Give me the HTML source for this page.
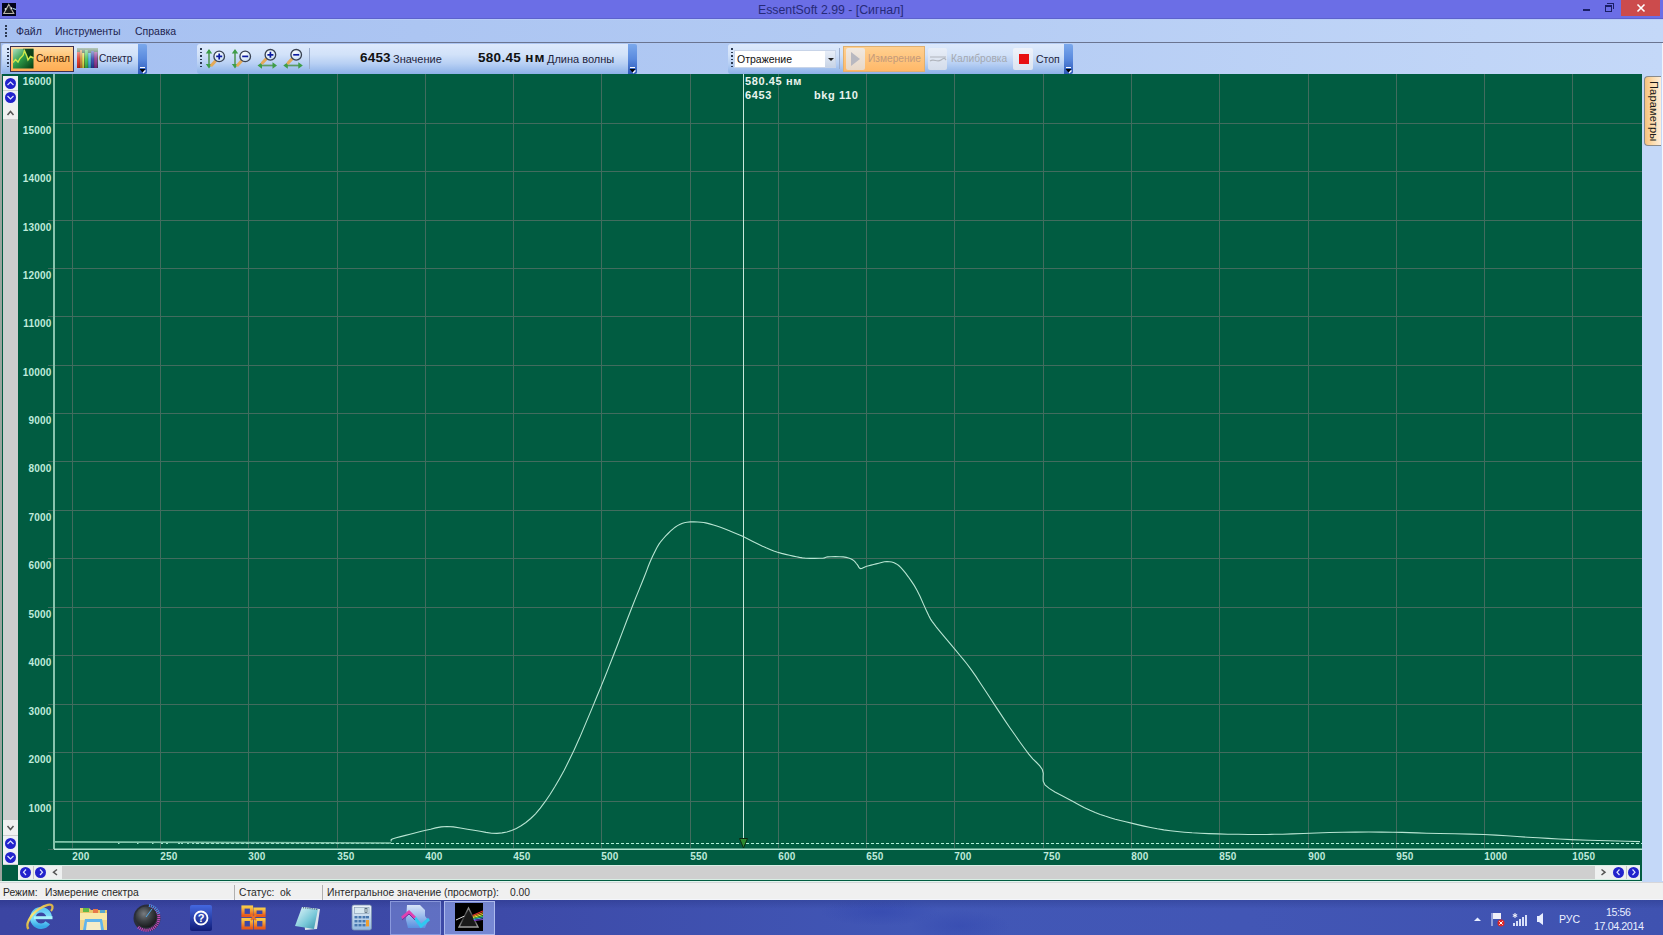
<!DOCTYPE html>
<html><head><meta charset="utf-8">
<style>
*{margin:0;padding:0;box-sizing:border-box}
html,body{width:1663px;height:935px;overflow:hidden;background:#c4d8f8;font-family:"Liberation Sans",sans-serif}
.a{position:absolute}
#title{left:0;top:0;width:1663px;height:19px;background:#6b6ee6;border-bottom:1px solid #5c62cc}
#title .t{left:758px;top:3px;font-size:12.3px;color:#262a78;white-space:nowrap}
#menu{left:0;top:19px;width:1663px;height:24px;background:linear-gradient(90deg,#a6c0f1 0%,#b2caf3 50%,#c4d8f8 100%);border-top:1px solid #b8ccf8;border-bottom:1px solid #6a7490;box-shadow:0 1px 0 #8a94aa}
.mi{font-size:10.5px;color:#1c2450;top:5px;white-space:nowrap}
#dock{left:0;top:43px;width:1663px;height:31px;background:linear-gradient(90deg,#a4bff1 0%,#b2caf3 50%,#c4d8f8 100%)}
.tb{top:1px;height:30px;background:linear-gradient(#dde9fc 0%,#d2e2f9 35%,#b8d0f4 65%,#8cb1e8 100%);border-radius:3px 0 0 3px}
.cap{top:1px;width:9px;height:30px;background:linear-gradient(#7aa8ec,#5a8ade 50%,#2c58b8);border-radius:0 2px 2px 0}
.grip{width:2px;background:repeating-linear-gradient(#2c3a52 0 1.6px,transparent 1.6px 3.5px)}
.tt{font-size:11px;color:#1e2440;white-space:nowrap}
#plot{left:0;top:74px;width:1642px;height:807px;background:#015c41}
svg{position:absolute;left:0;top:0}
.yl{position:absolute;left:0;width:51.5px;text-align:right;font-size:10px;font-weight:bold;letter-spacing:0.2px;color:#bfeadb;line-height:12px}
.xl{position:absolute;top:851px;font-size:10px;font-weight:bold;letter-spacing:0.2px;color:#bfeadb;line-height:12px}
#status{left:0;top:882px;width:1663px;height:18px;background:#f0f0f0;border-top:1px solid #d6d6da;border-bottom:1px solid #f4f6fc}
.st{font-size:10.3px;color:#282828;top:4px;white-space:nowrap}
#task{left:0;top:900px;width:1663px;height:35px;background:linear-gradient(rgba(10,20,80,.18),rgba(0,0,0,0) 25%),radial-gradient(ellipse 60px 14px at 880px 12px,rgba(40,60,170,.35),rgba(0,0,0,0)),radial-gradient(ellipse 50px 16px at 960px 26px,rgba(40,60,170,.3),rgba(0,0,0,0)),linear-gradient(90deg,#3b45a2 0%,#3d4aa8 30%,#4157b6 55%,#4256b5 75%,#3f52b0 100%)}
.bc{width:11px;height:11px;border-radius:50%;background:#2222cc}
</style></head><body>

<!-- title bar -->
<div id="title" class="a">
  <div class="a" style="left:2px;top:3px;width:14px;height:13px;background:#02021a"></div>
  <svg width="16" height="16" style="left:2px;top:2px"><path d="M6.8,2.5 L11.8,11.5 L1.8,11.5 Z" fill="#1a1a1a" stroke="#b8b4a8" stroke-width="1.1"/><path d="M7,4 L9,8" stroke="#5a5a5a" stroke-width="1"/><circle cx="3.5" cy="7" r=".9" fill="#e0e0e0"/><circle cx="9.5" cy="6.2" r=".9" fill="#f0f0f0"/><path d="M11,6.5 L14,7.5" stroke="#a8d8e8" stroke-width="1.3"/></svg>
  <div class="a t">EssentSoft 2.99 - [Сигнал]</div>
  <div class="a" style="left:1583px;top:9px;width:7px;height:2px;background:#1a1f66"></div>
  <div class="a" style="left:1607px;top:3px;width:7px;height:6px;border:1px solid #1a1f66;border-left:none;border-bottom:none"></div>
  <div class="a" style="left:1605px;top:5px;width:7px;height:7px;border:1px solid #1a1f66;border-top-width:2px"></div>
  <div class="a" style="left:1621px;top:0;width:39px;height:16px;background:#cc4b4c"></div>
  <svg width="20" height="16" style="left:1631px;top:0"><path d="M6.5,4.5 L13.5,11.5 M13.5,4.5 L6.5,11.5" stroke="#fff" stroke-width="1.6"/></svg>
</div>

<!-- menu -->
<div id="menu" class="a">
  <div class="a grip" style="left:5px;top:5px;height:13px"></div>
  <div class="a mi" style="left:16px">Файл</div>
  <div class="a mi" style="left:55px">Инструменты</div>
  <div class="a mi" style="left:135px">Справка</div>
</div>

<!-- toolbar dock -->
<div id="dock" class="a">
  <div class="a" style="left:0;top:0;width:1px;height:31px;background:#8090a8"></div>
  <!-- toolbar 1 -->
  <div class="a tb" style="left:2px;width:137px"></div>
  <div class="a cap" style="left:138px"><svg width="9" height="8" style="left:0;top:22px"><path d="M2,1.5 H7" stroke="#fff" stroke-width="1"/><path d="M1.5,3 H7.5 L4.5,6.5 Z" fill="#000"/><path d="M5,7 L7.5,4.5" stroke="#fff" stroke-width="1.2"/></svg></div>
  <div class="a grip" style="left:7px;top:5px;height:19px"></div>
  <div class="a" style="left:10px;top:3px;width:64px;height:26px;border:1px solid #3c3050;background:linear-gradient(#ffdba0,#ffb964 60%,#ffad55);"></div>
  <svg width="21" height="21" style="left:13px;top:5px">
    <defs><linearGradient id="g1" x1="0" y1="0" x2="1" y2="1"><stop offset="0" stop-color="#b0e0c0"/><stop offset=".45" stop-color="#2e9c4a"/><stop offset="1" stop-color="#023a10"/></linearGradient></defs>
    <rect x="0" y="0.8" width="20.5" height="19.7" fill="url(#g1)"/>
    <path d="M11.5,2.5 L14,8 L15,12 L17.5,8 L20.5,9.5 V0.8 H10 Z" fill="#042a0e" opacity=".75"/>
    <path d="M0,14.5 L2.5,11.5 L5,14 L7,10.5 L10,7.5 L11.5,2.8 L14,8.5 L15,12 L17.5,8.5 L20.5,10" fill="none" stroke="#cce84c" stroke-width="1.4"/>
  </svg>
  <div class="a tt" style="left:36px;top:10px;color:#4a2200;font-size:10.2px">Сигнал</div>
  <svg width="21" height="21" style="left:77px;top:5px">
    <defs>
      <linearGradient id="sb" x1="0" y1="0" x2="0" y2="1"><stop offset="0" stop-color="#fff" stop-opacity=".7"/><stop offset=".55" stop-color="#fff" stop-opacity=".15"/><stop offset="1" stop-color="#000" stop-opacity=".2"/></linearGradient>
    </defs>
    <rect x="0" y="0" width="21" height="20" fill="#0f4a22"/>
    <rect x="0" y="4" width="3" height="16" fill="#e02818"/><rect x="3" y="2" width="2" height="18" fill="#f08830"/><rect x="5" y="5" width="2.5" height="15" fill="#e8e040"/><rect x="8" y="2" width="3" height="18" fill="#38c048"/><rect x="11" y="5" width="3" height="15" fill="#38b0e0"/><rect x="14" y="3" width="3" height="17" fill="#2838b0"/><rect x="17" y="4" width="3.5" height="16" fill="#8a2890"/>
    <g stroke="#0f3a1a" stroke-width=".6" opacity=".6"><path d="M3,0 V20 M5,0 V20 M7.5,0 V20 M11,0 V20 M14,0 V20 M17,0 V20"/></g>
    <rect x="0" y="0" width="21" height="20" fill="url(#sb)"/>
  </svg>
  <div class="a tt" style="left:99px;top:10px;font-size:10.2px">Спектр</div>

  <!-- toolbar 2 -->
  <div class="a tb" style="left:197px;width:432px"></div>
  <div class="a cap" style="left:628px"><svg width="9" height="8" style="left:0;top:22px"><path d="M2,1.5 H7" stroke="#fff" stroke-width="1"/><path d="M1.5,3 H7.5 L4.5,6.5 Z" fill="#000"/><path d="M5,7 L7.5,4.5" stroke="#fff" stroke-width="1.2"/></svg></div>
  <div class="a grip" style="left:200px;top:5px;height:19px"></div>
  <svg width="120" height="31" style="left:200px;top:0px">
    <defs>
      <linearGradient id="zg" x1="0" y1="0" x2="0" y2="1"><stop offset="0" stop-color="#58b060"/><stop offset=".5" stop-color="#7a9a80"/><stop offset="1" stop-color="#2a7a38"/></linearGradient>
      <linearGradient id="zg2" x1="0" y1="0" x2="1" y2="0"><stop offset="0" stop-color="#3a9a48"/><stop offset=".5" stop-color="#7a9a80"/><stop offset="1" stop-color="#3a9a48"/></linearGradient>
      <radialGradient id="zgl" cx=".4" cy=".35" r=".7"><stop offset="0" stop-color="#ffffff"/><stop offset="1" stop-color="#c4dcf4"/></radialGradient>
    </defs>
    <g transform="translate(0,0)"><path d="M9,7 V23" stroke="#5c9c64" stroke-width="1.7"/><path d="M5.8,10.5 L9,6 L12.2,10.5 Z M5.8,21 L9,25.5 L12.2,21 Z" fill="#3e9e48"/><path d="M11.6,22.2 L15.4,17.9" stroke="#e4aa5a" stroke-width="3" stroke-linecap="round"/><circle cx="19.2" cy="13.4" r="5.3" fill="url(#zgl)" stroke="#3a4252" stroke-width="1.3"/><path d="M16.2,13.4 H22.2 M19.2,10.4 V16.4" stroke="#0a1aa0" stroke-width="1.7"/></g><g transform="translate(26,0)"><path d="M9,7 V23" stroke="#5c9c64" stroke-width="1.7"/><path d="M5.8,10.5 L9,6 L12.2,10.5 Z M5.8,21 L9,25.5 L12.2,21 Z" fill="#3e9e48"/><path d="M11.6,22.2 L15.4,17.9" stroke="#e4aa5a" stroke-width="3" stroke-linecap="round"/><circle cx="19.2" cy="13.4" r="5.3" fill="url(#zgl)" stroke="#3a4252" stroke-width="1.3"/><path d="M16.2,13.4 H22.2" stroke="#0a1aa0" stroke-width="1.7"/></g><g transform="translate(0,0)"><path d="M60,22.5 H75" stroke="#5c9c64" stroke-width="1.7"/><path d="M62,19.3 L57.5,22.5 L62,25.7 Z M72.5,19.3 L77,22.5 L72.5,25.7 Z" fill="#3e9e48"/><path d="M62.3,20 L66.2,15.9" stroke="#e4aa5a" stroke-width="3" stroke-linecap="round"/><circle cx="70.4" cy="11.8" r="5.3" fill="url(#zgl)" stroke="#3a4252" stroke-width="1.3"/><path d="M67.4,11.8 H73.4 M70.4,8.8 V14.8" stroke="#0a1aa0" stroke-width="1.7"/></g><g transform="translate(25.8,0)"><path d="M60,22.5 H75" stroke="#5c9c64" stroke-width="1.7"/><path d="M62,19.3 L57.5,22.5 L62,25.7 Z M72.5,19.3 L77,22.5 L72.5,25.7 Z" fill="#3e9e48"/><path d="M62.3,20 L66.2,15.9" stroke="#e4aa5a" stroke-width="3" stroke-linecap="round"/><circle cx="70.4" cy="11.8" r="5.3" fill="url(#zgl)" stroke="#3a4252" stroke-width="1.3"/><path d="M67.4,11.8 H73.4" stroke="#0a1aa0" stroke-width="1.7"/></g>
  </svg>
  <div class="a" style="left:309px;top:5px;width:1px;height:21px;background:#9aaccc"></div>
  <div class="a tt" style="left:360px;top:7px;font-size:13.5px;font-weight:bold;color:#111;letter-spacing:0.2px">6453</div>
  <div class="a tt" style="left:393px;top:10px">Значение</div>
  <div class="a tt" style="left:478px;top:7px;font-size:13.5px;font-weight:bold;color:#111;letter-spacing:0.3px">580.45 <span style="letter-spacing:1.2px">нм</span></div>
  <div class="a tt" style="left:547px;top:10px">Длина волны</div>

  <!-- toolbar 3 -->
  <div class="a tb" style="left:728px;width:337px"></div>
  <div class="a cap" style="left:1064px"><svg width="9" height="8" style="left:0;top:22px"><path d="M2,1.5 H7" stroke="#fff" stroke-width="1"/><path d="M1.5,3 H7.5 L4.5,6.5 Z" fill="#000"/><path d="M5,7 L7.5,4.5" stroke="#fff" stroke-width="1.2"/></svg></div>
  <div class="a grip" style="left:731px;top:5px;height:19px"></div>
  <div class="a" style="left:734px;top:7px;width:102px;height:18px;background:#fff;border:1px solid #c8d4e8"></div>
  <div class="a" style="left:825px;top:8px;width:10px;height:16px;background:linear-gradient(#e8eef8,#c8d4e6)"></div>
  <svg width="6" height="4" style="left:828px;top:15px"><path d="M0,0 H6 L3,3 Z" fill="#222"/></svg>
  <div class="a tt" style="left:737px;top:10px;font-size:10.5px;color:#111">Отражение</div>
  <div class="a" style="left:839px;top:5px;width:1px;height:21px;background:#9aaccc"></div>
  <div class="a" style="left:843px;top:3px;width:82px;height:26px;border:1px solid #e0b070;background:linear-gradient(#ffd090,#ffb868)"></div>
  <div class="a" style="left:846px;top:5px;width:19px;height:22px;background:linear-gradient(#f0e8e0,#e8d8c8);border-radius:2px"></div>
  <svg width="10" height="14" style="left:851px;top:9px"><path d="M0,0 L9,7 L0,14 Z" fill="#b8b8c0"/></svg>
  <div class="a tt" style="left:868px;top:10px;color:#c49a7a;font-size:10.2px">Измерение</div>
  <div class="a" style="left:928px;top:5px;width:19px;height:22px;background:linear-gradient(#e8eef8,#d4dcea);border-radius:2px"></div>
  <svg width="18" height="10" style="left:929px;top:11px"><path d="M1,3 H17 M1,7 C5,4 8,9 12,6 S16,5 17,6" fill="none" stroke="#b0b4bc" stroke-width="1.2"/></svg>
  <div class="a tt" style="left:951px;top:10px;color:#a4a8b0;font-size:10.2px">Калибровка</div>
  <div class="a" style="left:1013px;top:5px;width:20px;height:22px;background:linear-gradient(#eef2fa,#dce4f0);border-radius:2px"></div>
  <div class="a" style="left:1019px;top:11px;width:10px;height:10px;background:#e81010"></div>
  <div class="a tt" style="left:1036px;top:10px;font-size:10.5px">Стоп</div>

  <div class="a" style="left:1662px;top:0;width:1px;height:31px;background:#f0f4fc"></div>
</div>

<!-- plot -->
<div id="plot" class="a">
  <div class="a" style="left:0;top:0;width:2px;height:807px;background:#9aa49e"></div>
</div>
<svg width="1663" height="935" style="left:0;top:0">
  <g stroke="#426c5e" stroke-width="1">
<line x1="72.5" y1="74" x2="72.5" y2="848" />
<line x1="160.5" y1="74" x2="160.5" y2="848" />
<line x1="248.5" y1="74" x2="248.5" y2="848" />
<line x1="337.5" y1="74" x2="337.5" y2="848" />
<line x1="425.5" y1="74" x2="425.5" y2="848" />
<line x1="513.5" y1="74" x2="513.5" y2="848" />
<line x1="601.5" y1="74" x2="601.5" y2="848" />
<line x1="690.5" y1="74" x2="690.5" y2="848" />
<line x1="778.5" y1="74" x2="778.5" y2="848" />
<line x1="866.5" y1="74" x2="866.5" y2="848" />
<line x1="954.5" y1="74" x2="954.5" y2="848" />
<line x1="1043.5" y1="74" x2="1043.5" y2="848" />
<line x1="1131.5" y1="74" x2="1131.5" y2="848" />
<line x1="1219.5" y1="74" x2="1219.5" y2="848" />
<line x1="1308.5" y1="74" x2="1308.5" y2="848" />
<line x1="1396.5" y1="74" x2="1396.5" y2="848" />
<line x1="1484.5" y1="74" x2="1484.5" y2="848" />
<line x1="1572.5" y1="74" x2="1572.5" y2="848" />
<line x1="48" y1="801.5" x2="1642" y2="801.5" />
<line x1="48" y1="752.5" x2="1642" y2="752.5" />
<line x1="48" y1="704.5" x2="1642" y2="704.5" />
<line x1="48" y1="655.5" x2="1642" y2="655.5" />
<line x1="48" y1="607.5" x2="1642" y2="607.5" />
<line x1="48" y1="558.5" x2="1642" y2="558.5" />
<line x1="48" y1="510.5" x2="1642" y2="510.5" />
<line x1="48" y1="461.5" x2="1642" y2="461.5" />
<line x1="48" y1="413.5" x2="1642" y2="413.5" />
<line x1="48" y1="365.5" x2="1642" y2="365.5" />
<line x1="48" y1="316.5" x2="1642" y2="316.5" />
<line x1="48" y1="268.5" x2="1642" y2="268.5" />
<line x1="48" y1="220.5" x2="1642" y2="220.5" />
<line x1="48" y1="171.5" x2="1642" y2="171.5" />
<line x1="48" y1="123.5" x2="1642" y2="123.5" />
  </g>
  <line x1="54" y1="74" x2="54" y2="850" stroke="#88c4ae" stroke-width="2"/>
  <line x1="48" y1="849.5" x2="54" y2="849.5" stroke="#3b6a5a" stroke-width="1"/><line x1="54" y1="849.3" x2="1642" y2="849.3" stroke="#b0e2d0" stroke-width="1.5"/>
  <line x1="196" y1="843.5" x2="1642" y2="843.5" stroke="#b0f0d8" stroke-width="1" stroke-dasharray="3,2"/><path d="M118,843.5 h1.5 M137,843.5 h1.5 M152,843.5 h1.5 M161,843.5 h2 M166,843.5 h2 M178,843.5 h2 M181,843.5 h2 M187,843.5 h2 M192,843.5 h2" stroke="#a0e8d0" stroke-width="1"/><path d="M54,841.9 L200,842.4 L391,843" fill="none" stroke="#80c4aa" stroke-width="1.6"/>
  <path d="M391.2,841.6 L391.2,840.7 L391.2,840.4 L391.0,840.0 L391.4,839.5 L393.0,838.8 L396.2,837.8 L400.6,836.6 L405.5,835.4 L410.0,834.2 L413.9,833.2 L417.6,832.2 L421.5,831.3 L425.8,830.3 L430.6,829.2 L435.7,827.9 L441.2,826.9 L447.0,826.5 L453.4,826.9 L460.4,828.0 L467.4,829.2 L474.0,830.3 L480.1,831.3 L486.0,832.4 L491.6,833.2 L497.0,833.4 L502.1,832.9 L506.9,832.0 L511.6,830.5 L516.3,828.4 L521.1,825.7 L525.9,822.5 L530.7,818.5 L535.5,813.8 L540.3,808.1 L545.1,801.7 L550.0,794.5 L554.8,786.8 L559.5,778.7 L564.2,770.2 L568.9,760.8 L574.0,750.2 L579.7,737.6 L585.7,723.4 L591.7,709.1 L597.0,696.3 L601.3,685.9 L605.0,676.8 L608.5,667.9 L612.5,657.8 L617.2,645.7 L622.3,632.4 L627.3,619.3 L631.8,607.8 L635.6,598.1 L639.1,589.6 L642.1,582.2 L644.7,575.7 L646.7,570.6 L648.1,566.8 L649.4,563.5 L650.9,560.0 L652.7,556.0 L654.7,551.9 L656.7,548.0 L658.8,544.4 L661.0,541.3 L663.4,538.5 L665.7,535.9 L668.1,533.5 L670.4,531.2 L672.8,529.1 L675.1,527.2 L677.5,525.6 L679.7,524.4 L681.9,523.4 L684.2,522.7 L686.9,522.2 L690.2,521.9 L694.0,521.9 L697.7,522.0 L701.0,522.2 L703.6,522.5 L705.7,522.9 L707.8,523.4 L710.4,524.1 L713.5,525.0 L716.8,526.1 L720.5,527.3 L724.4,528.8 L728.8,530.5 L733.5,532.4 L738.4,534.5 L743.2,536.6 L748.0,538.9 L752.8,541.4 L757.5,543.8 L762.0,546.0 L766.1,547.8 L770.0,549.4 L773.8,550.9 L777.6,552.2 L781.6,553.4 L785.6,554.4 L789.5,555.3 L793.2,556.1 L796.4,556.8 L799.4,557.4 L802.3,557.9 L805.7,558.2 L810.0,558.4 L814.8,558.4 L819.4,558.3 L822.9,558.2 L824.7,557.9 L825.3,557.6 L825.9,557.2 L827.6,556.9 L830.9,556.7 L835.2,556.6 L839.6,556.7 L843.3,556.9 L846.2,557.4 L848.6,558.0 L850.7,558.8 L852.6,559.7 L854.1,560.8 L855.3,562.1 L856.3,563.5 L857.3,564.7 L858.1,565.9 L858.8,567.1 L859.5,568.1 L860.5,568.6 L861.8,568.5 L863.2,567.8 L864.9,567.0 L866.7,566.3 L868.8,565.7 L871.1,565.1 L873.6,564.5 L876.1,563.9 L878.8,563.2 L881.5,562.5 L884.3,561.8 L887.0,561.6 L889.5,561.7 L891.8,562.0 L894.1,562.7 L896.4,563.9 L898.7,565.5 L900.9,567.6 L903.1,570.1 L905.6,573.2 L908.3,576.8 L911.2,580.9 L914.2,585.4 L917.1,590.5 L920.1,596.5 L923.1,603.4 L926.1,610.0 L928.7,615.5 L930.6,619.1 L932.1,621.4 L933.8,623.7 L936.4,627.1 L940.5,632.2 L945.5,638.2 L950.8,644.4 L955.6,650.2 L959.6,655.0 L963.3,659.4 L967.0,664.0 L971.0,669.4 L975.6,675.9 L980.4,683.2 L985.4,690.8 L990.3,698.3 L995.1,705.6 L999.9,712.9 L1004.7,720.1 L1009.5,727.2 L1014.5,734.3 L1019.5,741.5 L1024.4,748.2 L1028.8,754.1 L1032.8,758.8 L1036.6,762.5 L1039.8,765.9 L1042.3,769.5 L1043.3,773.4 L1043.1,777.3 L1043.2,781.2 L1045.0,784.9 L1049.2,788.4 L1054.9,791.9 L1061.2,795.2 L1067.3,798.4 L1073.0,801.6 L1078.8,804.7 L1084.5,807.7 L1090.0,810.3 L1095.2,812.5 L1100.2,814.4 L1105.1,816.1 L1110.2,817.7 L1115.3,819.2 L1120.4,820.5 L1125.7,821.8 L1131.4,823.1 L1137.5,824.6 L1144.0,826.1 L1150.6,827.5 L1157.3,828.8 L1163.8,829.9 L1170.3,830.7 L1177.1,831.5 L1184.3,832.2 L1192.1,832.8 L1200.3,833.2 L1208.9,833.6 L1218.0,833.9 L1227.8,834.2 L1238.2,834.3 L1248.6,834.5 L1258.4,834.5 L1266.9,834.5 L1274.6,834.3 L1282.6,834.2 L1292.0,833.9 L1303.4,833.5 L1316.2,833.0 L1329.5,832.5 L1342.5,832.2 L1355.5,832.1 L1368.8,832.0 L1381.6,832.1 L1393.0,832.2 L1402.1,832.4 L1409.4,832.6 L1417.0,832.9 L1426.7,833.2 L1439.7,833.5 L1454.7,833.7 L1470.1,834.1 L1484.0,834.5 L1495.9,835.1 L1506.7,835.8 L1517.1,836.5 L1527.7,837.2 L1538.1,837.8 L1548.1,838.4 L1558.8,839.0 L1571.5,839.6 L1588.5,840.2 L1608.5,840.8 L1627.1,841.3 L1640.0,841.6" fill="none" stroke="#b8e4d2" stroke-width="1.1"/>
  <line x1="743.5" y1="74" x2="743.5" y2="838" stroke="#c8e8da" stroke-width="1"/>
  <path d="M739.5,838.5 H747.5 L743.5,848 Z" fill="#2e8a30" stroke="#0a2a10" stroke-width="1"/>
</svg>
<div class="a" style="left:0;top:0;width:1663px;height:935px">
<div class="yl" style="top:803.1px">1000</div>
<div class="yl" style="top:754.1px">2000</div>
<div class="yl" style="top:706.1px">3000</div>
<div class="yl" style="top:657.1px">4000</div>
<div class="yl" style="top:609.1px">5000</div>
<div class="yl" style="top:560.1px">6000</div>
<div class="yl" style="top:512.1px">7000</div>
<div class="yl" style="top:463.1px">8000</div>
<div class="yl" style="top:415.1px">9000</div>
<div class="yl" style="top:367.1px">10000</div>
<div class="yl" style="top:318.1px">11000</div>
<div class="yl" style="top:270.1px">12000</div>
<div class="yl" style="top:222.1px">13000</div>
<div class="yl" style="top:173.1px">14000</div>
<div class="yl" style="top:125.1px">15000</div>
<div class="yl" style="top:75.8px">16000</div>
<div class="xl" style="left:72.3px">200</div>
<div class="xl" style="left:160.3px">250</div>
<div class="xl" style="left:248.3px">300</div>
<div class="xl" style="left:337.3px">350</div>
<div class="xl" style="left:425.3px">400</div>
<div class="xl" style="left:513.3px">450</div>
<div class="xl" style="left:601.3px">500</div>
<div class="xl" style="left:690.3px">550</div>
<div class="xl" style="left:778.3px">600</div>
<div class="xl" style="left:866.3px">650</div>
<div class="xl" style="left:954.3px">700</div>
<div class="xl" style="left:1043.3px">750</div>
<div class="xl" style="left:1131.3px">800</div>
<div class="xl" style="left:1219.3px">850</div>
<div class="xl" style="left:1308.3px">900</div>
<div class="xl" style="left:1396.3px">950</div>
<div class="xl" style="left:1484.3px">1000</div>
<div class="xl" style="left:1572.3px">1050</div>
</div>
<div class="a" style="left:745px;top:75px;font-size:11px;font-weight:bold;color:#e8f4ee;letter-spacing:0.6px;white-space:nowrap">580.45 нм</div>
<div class="a" style="left:745px;top:89px;font-size:11px;font-weight:bold;color:#e8f4ee;letter-spacing:0.6px">6453</div>
<div class="a" style="left:814px;top:89px;font-size:11px;font-weight:bold;color:#e8f4ee;letter-spacing:0.6px;white-space:nowrap">bkg 110</div>

<!-- left scrollbar -->
<div class="a" style="left:3px;top:76px;width:15px;height:789px;background:#cdcdcd"></div>
<div class="a" style="left:3px;top:76px;width:15px;height:14px;background:#eef0f4"></div>
<div class="a" style="left:3px;top:91px;width:15px;height:14px;background:#eef0f4"></div>
<div class="a" style="left:3px;top:105px;width:15px;height:14px;background:#f0f0f0"></div>
<div class="a bc" style="left:5px;top:77.5px"></div>
<div class="a bc" style="left:5px;top:91.5px"></div>
<svg width="15" height="200" style="left:3px;top:76px">
  <path d="M4.5,9 L7.5,6 L10.5,9" stroke="#e0e4ff" stroke-width="1.2" fill="none"/>
  <path d="M4.5,20 L7.5,23 L10.5,20" stroke="#e0e4ff" stroke-width="1.2" fill="none"/>
  <path d="M4.5,39 L7.5,35.5 L10.5,39" stroke="#555" stroke-width="1.5" fill="none"/>
</svg>
<div class="a" style="left:3px;top:820px;width:15px;height:15px;background:#f0f0f0"></div>
<div class="a" style="left:3px;top:836px;width:15px;height:14px;background:#eef0f4"></div>
<div class="a" style="left:3px;top:850px;width:15px;height:14px;background:#eef0f4"></div>
<div class="a bc" style="left:5px;top:837.5px"></div>
<div class="a bc" style="left:5px;top:851.5px"></div>
<svg width="15" height="50" style="left:3px;top:820px">
  <path d="M4.5,6 L7.5,9.5 L10.5,6" stroke="#555" stroke-width="1.5" fill="none"/>
  <path d="M4.5,24 L7.5,21 L10.5,24" stroke="#e0e4ff" stroke-width="1.2" fill="none"/>
  <path d="M4.5,36 L7.5,39 L10.5,36" stroke="#e0e4ff" stroke-width="1.2" fill="none"/>
</svg>

<!-- bottom scrollbar -->
<div class="a" style="left:18px;top:865px;width:1622px;height:15px;background:#cfcfcf;border-top:1px solid #d8eee4;border-bottom:1px solid #d8eee4"></div>
<div class="a" style="left:18px;top:866px;width:44px;height:13px;background:#eef0f0"></div>
<div class="a" style="left:1595px;top:866px;width:45px;height:13px;background:#eef0f0"></div>
<div class="a" style="left:33px;top:866px;width:1px;height:13px;background:#c8c8c8"></div>
<div class="a" style="left:1626px;top:866px;width:1px;height:13px;background:#c8c8c8"></div>
<div class="a bc" style="left:19.5px;top:866.7px"></div>
<div class="a bc" style="left:35px;top:866.7px"></div>
<div class="a bc" style="left:1613px;top:866.7px"></div>
<div class="a bc" style="left:1628px;top:866.7px"></div>
<svg width="60" height="14" style="left:18px;top:865px">
  <path d="M8,4.5 L5.5,7.2 L8,10" stroke="#e0e4ff" stroke-width="1.2" fill="none"/>
  <path d="M22,4.5 L24.5,7.2 L22,10" stroke="#e0e4ff" stroke-width="1.2" fill="none"/>
  <path d="M39,4.5 L35.5,7.2 L39,10" stroke="#555" stroke-width="1.5" fill="none"/>
</svg>
<svg width="60" height="14" style="left:1595px;top:865px">
  <path d="M6.5,4.5 L10,7.2 L6.5,10" stroke="#555" stroke-width="1.5" fill="none"/>
  <path d="M24.5,4.5 L22,7.2 L24.5,10" stroke="#e0e4ff" stroke-width="1.2" fill="none"/>
  <path d="M37.5,4.5 L40,7.2 L37.5,10" stroke="#e0e4ff" stroke-width="1.2" fill="none"/>
</svg>
<div class="a" style="left:0;top:881px;width:1642px;height:1px;background:#e2f6ee"></div>

<!-- right param tab -->
<div class="a" style="left:1644px;top:76px;width:17px;height:70px;background:linear-gradient(90deg,#f6c27c,#fcdcae 50%,#fdeedc);border:1px solid #8a8a8a;border-right:none;border-radius:4px 0 0 4px"></div>
<div class="a" style="left:1647px;top:81px;width:60px;height:14px;transform-origin:0 0;transform:translate(12.5px,0) rotate(90deg);font-size:11px;letter-spacing:0.2px;color:#1a1a1a;white-space:nowrap">Параметры</div>
<div class="a" style="left:1662px;top:74px;width:1px;height:807px;background:#f4f8ff"></div>

<!-- status -->
<div id="status" class="a">
  <div class="a st" style="left:3px">Режим:</div>
  <div class="a st" style="left:45px">Измерение спектра</div>
  <div class="a" style="left:234px;top:2px;width:1px;height:16px;background:#b0b0b0"></div>
  <div class="a st" style="left:239px">Статус:</div>
  <div class="a st" style="left:280px">ok</div>
  <div class="a" style="left:322px;top:2px;width:1px;height:16px;background:#b0b0b0"></div>
  <div class="a st" style="left:327px">Интегральное значение (просмотр):</div>
  <div class="a st" style="left:510px">0.00</div>
</div>

<!-- taskbar -->
<div id="task" class="a">
  <div class="a" style="left:390px;top:1px;width:51px;height:34px;background:rgba(150,170,235,.40);border:1px solid rgba(190,205,255,.45)"></div>
  <div class="a" style="left:444px;top:1px;width:51px;height:34px;background:rgba(165,185,245,.55);border:1px solid rgba(210,220,255,.6)"></div>
  <!-- IE -->
  <svg width="32" height="32" style="left:24px;top:2px">
    <defs><linearGradient id="ie" x1="0" y1="0" x2="0" y2="1"><stop offset="0" stop-color="#60c8f4"/><stop offset=".5" stop-color="#80e4fc"/><stop offset="1" stop-color="#38a8e8"/></linearGradient>
    <linearGradient id="gold" x1="0" y1="1" x2="1" y2="0"><stop offset="0" stop-color="#d8b040"/><stop offset=".4" stop-color="#f8e878"/><stop offset="1" stop-color="#d8b048"/></linearGradient></defs>
    <path d="M23.76,20.73 A8.25,8.25 0 1,1 25.25,16" fill="none" stroke="url(#ie)" stroke-width="5.5"/>
    <rect x="10" y="14.2" width="18.5" height="3" fill="#a8f4fc"/>
    <path d="M4.5,27 C1,23 6,13 15,7 C21,3 28,1 28.5,4.5 C28.8,6.5 28,8 27,9" fill="none" stroke="url(#gold)" stroke-width="2.3"/>
  </svg>
  <!-- folder -->
  <svg width="30" height="28" style="left:79px;top:5px">
    <path d="M1,3 H10 L12,5 H28 V24 H1 Z" fill="#e8c868"/>
    <rect x="4" y="3" width="6" height="4" fill="#60b848"/><rect x="14" y="4" width="5" height="4" fill="#e87848"/><rect x="21" y="5" width="5" height="3" fill="#58a8d0"/>
    <path d="M1,8 H28 V24 H1 Z" fill="#f8e8a8"/>
    <path d="M1,15 H28 V25 H1 Z" fill="#f0d488"/>
    <path d="M6,14 H23 L25,25 H4 Z" fill="#60b4ec"/><path d="M8,17 H21 L22,25 H7 Z" fill="#f4ecc8"/>
  </svg>
  <!-- knob -->
  <svg width="30" height="30" style="left:132px;top:3px">
    <defs><radialGradient id="kn" cx=".4" cy=".35" r=".7"><stop offset="0" stop-color="#787c80"/><stop offset=".5" stop-color="#3c4044"/><stop offset="1" stop-color="#141618"/></radialGradient></defs>
    <circle cx="15" cy="15" r="13.5" fill="#2a2e3a"/>
    <path d="M17,2.5 A12.5,12.5 0 1,1 6,24" fill="none" stroke="#c848c0" stroke-width="3" stroke-dasharray="1.2,0.8"/>
    <path d="M17,2.5 A12.5,12.5 0 0,1 27,11" fill="none" stroke="#3c8ce0" stroke-width="3" stroke-dasharray="1.2,0.8"/>
    <circle cx="14" cy="14" r="10.5" fill="url(#kn)"/>
    <path d="M14,14 L20,6" stroke="#50a8e8" stroke-width="1"/>
  </svg>
  <!-- help -->
  <svg width="24" height="30" style="left:189px;top:3px">
    <defs><linearGradient id="hp" x1="0" y1="0" x2="0" y2="1"><stop offset="0" stop-color="#4468e0"/><stop offset="1" stop-color="#101c78"/></linearGradient></defs>
    <rect x="1" y="2" width="22" height="26" rx="2" fill="url(#hp)"/>
    <circle cx="12" cy="15" r="6.5" fill="none" stroke="#fff" stroke-width="1.8"/>
    <text x="12" y="19" text-anchor="middle" font-family="Liberation Sans" font-size="11" font-weight="bold" fill="#fff">?</text>
  </svg>
  <!-- office -->
  <svg width="28" height="28" style="left:240px;top:4px">
    <defs><linearGradient id="of" x1="0" y1="0" x2="0" y2="1"><stop offset="0" stop-color="#f8c848"/><stop offset="1" stop-color="#e85a18"/></linearGradient></defs>
    <g fill="none" stroke="url(#of)" stroke-width="3.2">
      <rect x="3" y="3" width="8.5" height="8.5"/><path d="M15,5 H24 V11.5 H15 Z"/><path d="M3,15.5 H11.5 V24 H3 Z"/><path d="M15.5,15.5 H24 V24 H15.5 Z"/>
    </g>
    <path d="M11,11 L16,16 M16,11 L11,16" stroke="#e8702a" stroke-width="2"/>
  </svg>
  <!-- notepad -->
  <svg width="30" height="28" style="left:293px;top:4px">
    <defs><linearGradient id="np" x1="0" y1="0" x2="1" y2="1"><stop offset="0" stop-color="#e8f8fc"/><stop offset=".6" stop-color="#78c8d8"/><stop offset="1" stop-color="#3890a8"/></linearGradient></defs>
    <path d="M10,3 L27,5 L24,25 L12,26 Z" fill="#d8e4ec"/>
    <path d="M9,3 L25,5 L21,25 L2,22 Z" fill="url(#np)"/>
    <path d="M10,3.5 L25,5.5" stroke="#607080" stroke-width="1.5" stroke-dasharray="1,1.2"/>
  </svg>
  <!-- calc -->
  <svg width="22" height="28" style="left:351px;top:4px">
    <defs><linearGradient id="cl" x1="0" y1="0" x2="0" y2="1"><stop offset="0" stop-color="#f0f4f8"/><stop offset="1" stop-color="#90b8e0"/></linearGradient></defs>
    <rect x="1" y="1" width="19.5" height="25" rx="2" fill="url(#cl)" stroke="#7890b0" stroke-width=".8"/>
    <rect x="3.5" y="3.5" width="14.5" height="6" fill="#d8e8f0" stroke="#8098b0" stroke-width=".6"/>
    <rect x="14" y="4.5" width="2" height="4" fill="none" stroke="#405060" stroke-width=".7"/>
    <g fill="#4878b0"><rect x="3.5" y="12" width="3" height="2.4"/><rect x="7.5" y="12" width="3" height="2.4"/><rect x="11.5" y="12" width="3" height="2.4"/><rect x="15" y="12" width="3" height="2.4"/>
    <rect x="3.5" y="16" width="3" height="2.4"/><rect x="7.5" y="16" width="3" height="2.4"/><rect x="11.5" y="16" width="3" height="2.4"/>
    <rect x="3.5" y="20" width="3" height="2.4"/><rect x="7.5" y="20" width="3" height="2.4"/><rect x="11.5" y="20" width="3" height="2.4"/></g>
    <rect x="15" y="16" width="3" height="6.4" fill="#f0a030"/>
  </svg>
  <!-- app chart -->
  <svg width="30" height="26" style="left:401px;top:4px">
    <defs><linearGradient id="ap" x1="0" y1="0" x2="0" y2="1"><stop offset="0" stop-color="#d8e4f8"/><stop offset="1" stop-color="#5890e0"/></linearGradient></defs>
    <path d="M6,1 H19 L24,6 V12 L27,16 L24,24 H7 L5,16 Z" fill="url(#ap)"/>
    <path d="M1,14 L8,8 L14,14" fill="none" stroke="#e040b0" stroke-width="3"/>
    <path d="M14,14 L20,22 L28,15" fill="none" stroke="#30c8f0" stroke-width="3"/>
    <path d="M1,16 L8,10 L14,16" fill="none" stroke="#7030a0" stroke-width="1"/>
  </svg>
  <!-- prism -->
  <svg width="28" height="28" style="left:455px;top:3px">
    <defs><linearGradient id="pr" x1="0" y1="0" x2="0" y2="1"><stop offset="0" stop-color="#909090"/><stop offset=".5" stop-color="#303030"/><stop offset="1" stop-color="#a0a0a0"/></linearGradient></defs>
    <rect x="0" y="0" width="28" height="28" fill="#000"/>
    <path d="M13.5,5 L23,24 L4,24 Z" fill="#1a1a1a" stroke="url(#pr)" stroke-width="1.4"/>
    <path d="M1,17 L9.5,13" stroke="#e0e0e0" stroke-width="1"/>
    <g stroke-width="1.1"><path d="M17.5,12.5 L28,8" stroke="#e83030"/><path d="M17.8,13.5 L28,9.7" stroke="#f0a020"/><path d="M18.1,14.5 L28,11.4" stroke="#f0e840"/><path d="M18.4,15.5 L28,13.1" stroke="#40c850"/><path d="M18.7,16.5 L28,14.8" stroke="#40a0f0"/><path d="M19,17.5 L28,16.5" stroke="#8040d0"/></g>
  </svg>
  <!-- tray -->
  <svg width="10" height="6" style="left:1473px;top:16px"><path d="M1,5 L4.5,1.5 L8,5 Z" fill="#e8eeff"/></svg>
  <svg width="16" height="16" style="left:1491px;top:12px">
    <path d="M1,1 V14" stroke="#e8eeff" stroke-width="1"/><path d="M2,1 H10 V7 H2 Z" fill="#f0f0f8"/>
    <circle cx="10" cy="11" r="3.5" fill="#e02828"/><path d="M8.3,9.3 L11.7,12.7 M11.7,9.3 L8.3,12.7" stroke="#fff" stroke-width="1"/>
  </svg>
  <svg width="16" height="16" style="left:1512px;top:12px">
    <g fill="#d8e0f8"><rect x="1" y="11" width="2" height="3"/><rect x="4" y="9" width="2" height="5"/><rect x="7" y="7" width="2" height="7"/><rect x="10" y="5" width="2" height="9"/><rect x="13" y="3" width="2" height="11"/></g>
    <path d="M3,1 V6 M0.8,2.5 L5.2,4.5 M5.2,2.5 L0.8,4.5" stroke="#fff" stroke-width="1"/>
  </svg>
  <svg width="10" height="14" style="left:1536px;top:12px"><path d="M1,4 H3 L7,1 V13 L3,10 H1 Z" fill="#e8eeff"/></svg>
  <div class="a" style="left:1559px;top:13px;font-size:10.5px;color:#eef2ff">РУС</div>
  <div class="a" style="left:1606px;top:5.5px;font-size:10.6px;letter-spacing:-0.4px;line-height:12px;color:#e8eeff">15:56</div>
  <div class="a" style="left:1594px;top:19.5px;font-size:10.8px;letter-spacing:-0.45px;line-height:12px;color:#e8eeff">17.04.2014</div>
</div>

</body></html>
